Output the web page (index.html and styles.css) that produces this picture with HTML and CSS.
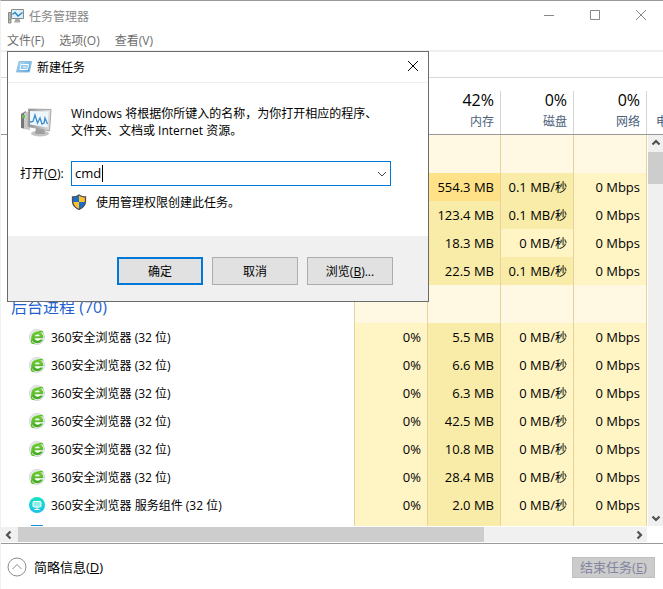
FILE: index.html
```html
<!DOCTYPE html>
<html lang="zh-CN">

<head>
  <meta charset="utf-8">
  <meta name="viewport" content="width=device-width, initial-scale=1.0">
  <title>任务管理器</title>
  <link rel="stylesheet" href="styles.css">
</head>

<body>
  <!-- 图标 -->
  <svg class="sprite" width="0" height="0" aria-hidden="true">
    <linearGradient id="green" x1="0" y1="0" x2="0" y2="1">
      <stop offset="0" stop-color="#7fd63c" />
      <stop offset="1" stop-color="#3aa51c" />
    </linearGradient>
    <linearGradient id="cyan" x1="0" y1="0" x2="0" y2="1">
      <stop offset="0" stop-color="#17e3c0" />
      <stop offset="1" stop-color="#1fbfea" />
    </linearGradient>
    <linearGradient id="blue" x1="0" y1="0" x2="1" y2="1">
      <stop offset="0" stop-color="#bfe0f5" />
      <stop offset="1" stop-color="#4c9ad8" />
    </linearGradient>
    <linearGradient id="metal" x1="0" y1="0" x2="1" y2="0">
      <stop offset="0" stop-color="#8d8d8d" />
      <stop offset="1" stop-color="#e4e4e4" />
    </linearGradient>
    <symbol id="browser" viewBox="0 0 16 16">
      <circle cx="8" cy="8" r="7.500" fill="#eceef1" stroke="#cfd3da" />
      <circle cx="8.300" cy="8.300" r="6" fill="url(#green)" />
      <path d="M5.600 7.300C6.200 4.900 10.300 4.800 10.800 7.300Z" fill="#fff" />
      <path d="M5.500 9.300H14.500V10.500H11C10 12.300 6.200 12.200 5.500 9.300Z" fill="#fff" />
      <path d="M2.200 14.300C.6 11.500 3.600 5.800 8.600 2.900C11.400 1.300 14.200 1 14.500 3.800C12.800 2.500 10.400 3.400 8 4.600C4.600 6.800 2.800 10.600 3.200 12.900C4 14 6.400 13.800 7.600 13.200C5.900 14.900 3.500 15.500 2.200 14.300Z" fill="#5fc02c" />
    </symbol>
    <symbol id="service" viewBox="0 0 16 16">
      <circle cx="8" cy="8" r="8" fill="url(#cyan)" />
      <rect x="4" y="4.500" width="8" height="5.500" rx="1" fill="#8ff0ea" stroke="#fff" />
      <path d="M8 10V12.500M5.500 12.500H10.500" stroke="#fff" fill="none" />
    </symbol>
    <symbol id="next" viewBox="0 0 16 16">
      <rect x="2" width="12" height="16" fill="#1296d6" />
    </symbol>
    <symbol id="arrow" viewBox="0 0 16 16">
      <path d="M4.500 9.500L8 6L11.500 9.500" fill="none" stroke="#505050" stroke-width="2.200" />
    </symbol>
  </svg>

  <div class="window">
    <header class="titlebar">
      <svg class="icon" viewBox="0 0 16 16">
        <path d="M.5 4.500H3V15H.5Z" fill="#b5b5b5" stroke="#8c8c8c" />
        <path d="M1 11.500H3" stroke="#53b553" />
        <path d="M3.500 1.500H15.500V10.500H3.500Z" fill="#d9effa" stroke="#8a8a8a" />
        <path d="M4.500 6.500L7 4.500L10 8L14.500 4.500" fill="none" stroke="#2b83bd" stroke-width="1.300" />
        <path d="M7.500 11H11.500L12.500 14.500H6Z" fill="#a9a9a9" />
      </svg>
      <h1>任务管理器</h1>
      <button class="win-btn" aria-label="最小化"><svg viewBox="0 0 12 12"><path d="M1 5.500H11" /></svg></button>
      <button class="win-btn" aria-label="最大化"><svg viewBox="0 0 12 12"><path d="M1.500 .5H10.500V9.500H1.500Z" /></svg></button>
      <button class="win-btn" aria-label="关闭"><svg viewBox="0 0 12 12"><path d="M1 0L11 10M11 0L1 10" /></svg></button>
    </header>
    <nav class="menu">
      <button>文件(F)</button>
      <button>选项(O)</button>
      <button>查看(V)</button>
    </nav>
    <div class="tabs"></div>

    <main class="grid">
      <table class="process">
        <colgroup>
          <col>
          <col class="num">
          <col class="num">
          <col class="num">
          <col class="num">
          <col class="rest">
        </colgroup>
        <thead>
          <tr>
            <th></th>
            <th></th>
            <th><div><b>42%</b>内存</div></th>
            <th><div><b>0%</b>磁盘</div></th>
            <th><div><b>0%</b>网络</div></th>
            <th class="power"><div>电</div></th>
          </tr>
        </thead>
        <tbody>
          <tr class="group"><td></td><td></td><td></td><td></td><td></td></tr>
          <tr><td></td><td></td><td class="high">554.3 MB</td><td class="mid">0.1 MB/<i>秒</i></td><td>0 Mbps</td></tr>
          <tr><td></td><td></td><td class="mid">123.4 MB</td><td class="mid">0.1 MB/<i>秒</i></td><td>0 Mbps</td></tr>
          <tr><td></td><td></td><td class="mid">18.3 MB</td><td>0 MB/<i>秒</i></td><td>0 Mbps</td></tr>
          <tr><td></td><td></td><td class="mid">22.5 MB</td><td class="mid">0.1 MB/<i>秒</i></td><td>0 Mbps</td></tr>
          <tr class="group"><td>后台进程 (70)</td><td></td><td></td><td></td><td></td></tr>
          <tr><td><svg class="icon"><use href="#browser" /></svg>360安全浏览器 (32 位)</td><td>0%</td><td class="mid">5.5 MB</td><td>0 MB/<i>秒</i></td><td>0 Mbps</td></tr>
          <tr><td><svg class="icon"><use href="#browser" /></svg>360安全浏览器 (32 位)</td><td>0%</td><td class="mid">6.6 MB</td><td>0 MB/<i>秒</i></td><td>0 Mbps</td></tr>
          <tr><td><svg class="icon"><use href="#browser" /></svg>360安全浏览器 (32 位)</td><td>0%</td><td class="mid">6.3 MB</td><td>0 MB/<i>秒</i></td><td>0 Mbps</td></tr>
          <tr><td><svg class="icon"><use href="#browser" /></svg>360安全浏览器 (32 位)</td><td>0%</td><td class="mid">42.5 MB</td><td>0 MB/<i>秒</i></td><td>0 Mbps</td></tr>
          <tr><td><svg class="icon"><use href="#browser" /></svg>360安全浏览器 (32 位)</td><td>0%</td><td class="mid">10.8 MB</td><td>0 MB/<i>秒</i></td><td>0 Mbps</td></tr>
          <tr><td><svg class="icon"><use href="#browser" /></svg>360安全浏览器 (32 位)</td><td>0%</td><td class="mid">28.4 MB</td><td>0 MB/<i>秒</i></td><td>0 Mbps</td></tr>
          <tr><td><svg class="icon"><use href="#service" /></svg>360安全浏览器 服务组件 (32 位)</td><td>0%</td><td class="mid">2.0 MB</td><td>0 MB/<i>秒</i></td><td>0 Mbps</td></tr>
          <tr><td><svg class="icon"><use href="#next" /></svg></td><td></td><td class="mid"></td><td></td><td></td></tr>
        </tbody>
      </table>
      <div class="vscroll">
        <svg class="icon"><use href="#arrow" /></svg>
        <div class="thumb"></div>
        <svg class="icon down"><use href="#arrow" /></svg>
      </div>
    </main>
    <div class="hscroll">
      <svg class="icon left"><use href="#arrow" /></svg>
      <div class="track"><div class="thumb"></div></div>
      <svg class="icon right"><use href="#arrow" /></svg>
    </div>

    <footer class="statusbar">
      <button class="fewer">
        <svg viewBox="0 0 20 20"><circle cx="10" cy="10" r="9" /><path d="M5.500 12L10 7.500L14.500 12" /></svg>
        <span>简略信息(<u>D</u>)</span>
      </button>
      <button class="end" disabled>结束任务(<u>E</u>)</button>
    </footer>
  </div>

  <div class="dialog" role="dialog" aria-labelledby="dlgTitle">
    <div class="dialog-title">
      <svg class="icon" viewBox="0 0 16 16">
        <path d="M3 2.500H15.500L13.500 13H.5Z" fill="url(#blue)" stroke="#8fc0e4" />
        <path d="M5 5.500H12.500L11.500 10.500H4Z" fill="#8fc6ee" stroke="#fff" />
        <path d="M7 8H10.500" stroke="#fff" />
      </svg>
      <h2 id="dlgTitle">新建任务</h2>
      <button class="win-btn" aria-label="关闭"><svg viewBox="0 0 12 12"><path d="M1 0L11 10M11 0L1 10" /></svg></button>
    </div>
    <form class="dialog-body">
      <svg class="computer" viewBox="0 0 32 32">
        <path d="M1 8L6 5V23L1 22Z" fill="#777" />
        <path d="M4 7L10 5V24L4 23Z" fill="#c9c9c9" />
        <path d="M2 9H5V12H2Z" fill="#68c545" />
        <ellipse cx="20" cy="27.500" rx="9" ry="3" fill="#c3c3c3" />
        <path d="M16 22H24L25 28H15Z" fill="#9f9f9f" />
        <path d="M8.500 3L31 3.500L29.500 25L8 20.500Z" fill="url(#metal)" stroke="#a5a5a5" />
        <path d="M10 5L28.500 5.500L27.500 21.500L10 18.500Z" fill="#eef7fd" />
        <path d="M10 16L13 15.500L15 9L17.500 17L20 12L22 18L24 17L25 12L27.500 18" fill="none" stroke="#3b8fd0" stroke-width="1.300" />
      </svg>
      <p>Windows 将根据你所键入的名称，为你打开相应的程序、<br>文件夹、文档或 Internet 资源。</p>
      <label for="txtOpen">打开(<u>O</u>):</label>
      <div class="combo">
        <input type="text" id="txtOpen" value="cmd">
        <span class="caret"></span>
        <button type="button" aria-label="历史记录"><svg viewBox="0 0 10 10"><path d="M1 3L5 7L9 3" /></svg></button>
      </div>
      <div class="admin">
        <svg class="icon" viewBox="0 0 16 16">
          <path d="M8 1C6 2.500 4 3 1.500 3V7C1.500 11 4.500 14 8 15.500Z" fill="#1b6ecb" />
          <path d="M8 1C10 2.500 12 3 14.500 3V7C14.500 11 11.500 14 8 15.500Z" fill="#ffc229" />
          <path d="M8 8H1.700C2.300 11.500 4.500 14 8 15.500Z" fill="#ffc229" />
          <path d="M8 8H14.300C13.700 11.500 11.500 14 8 15.500Z" fill="#1b6ecb" />
          <path d="M8 1C6 2.500 4 3 1.500 3V7C1.500 11 4.500 14 8 15.500C11.500 14 14.500 11 14.500 7V3C12 3 10 2.500 8 1Z" fill="none" stroke="#4c4f55" stroke-width="1.300" />
        </svg>
        <span>使用管理权限创建此任务。</span>
      </div>
    </form>
    <div class="dialog-buttons">
      <button class="primary">确定</button>
      <button>取消</button>
      <button>浏览(<u>B</u>)...</button>
    </div>
  </div>
</body>

</html>
```

FILE: styles.css
```css
* {
  box-sizing: border-box;
}

html,
body {
  margin: 0;
  height: 100%;
}

body {
  font: 12px/17px "Open Sans", "Noto Sans CJK SC", sans-serif;
  color: #000;
  background-color: #fff;
  overflow: hidden;
}

button,
input {
  font: inherit;
  color: inherit;
  border: none;
  padding: 0;
  background-color: transparent;
}

h1,
h2,
p {
  margin: 0;
  font-size: 12px;
  font-weight: normal;
}

.sprite {
  position: absolute;
}

.icon {
  display: block;
  width: 16px;
  height: 16px;
  flex: none;
}

.window {
  height: 100%;
  display: flex;
  flex-direction: column;
  border-top: 1px solid #999;
  border-left: 1px solid #f0f0f0;
}

.titlebar {
  display: flex;
  align-items: center;
  height: 30px;
  padding-left: 7px;
  color: #888;
}

.titlebar h1,
.dialog-title h2 {
  flex: 1;
  padding-left: 5px;
}

.win-btn {
  width: 46px;
  height: 28px;
  display: flex;
  align-items: center;
  justify-content: center;
}

.win-btn svg {
  width: 12px;
  height: 12px;
  fill: none;
  stroke: #888;
}

.titlebar .win-btn {
  padding-left: 2px;
}

.menu {
  display: flex;
  gap: 15px;
  height: 21px;
  padding-left: 6px;
  color: #6d6d6d;
  border-bottom: 2px solid #f0f0f0;
}

.tabs {
  height: 26px;
  border-bottom: 1px solid #d9d9d9;
}

/* 进程列表 */
.grid {
  flex: 1;
  min-height: 0;
  display: grid;
  grid-template: 57px minmax(0, 1fr) / minmax(0, 1fr) 15px;
  overflow: hidden;
}

.process {
  grid-area: 1 / 1 / 3 / 3;
  align-self: start;
  width: 100%;
  table-layout: fixed;
  border-collapse: separate;
  border-spacing: 0;
}

.num {
  width: 73px;
}

.rest {
  width: 16px;
}

.process th {
  height: 57px;
  padding: 13px 0 0;
  font-weight: normal;
  text-align: right;
  vertical-align: top;
  color: #4c607a;
  border-bottom: 1px solid #999;
}

.process th div {
  height: 43px;
  padding-right: 6px;
  border-right: 1px solid #d5d5d5;
}

.process .power div {
  border: none;
}

.process b {
  display: block;
  font-size: 16px;
  line-height: 18px;
  padding-bottom: 4px;
  font-weight: normal;
  color: #000;
}

.process .power div {
  width: 32px;
  padding: 22px 0 0 9px;
  text-align: left;
}

.process td {
  height: 28px;
  padding: 0 6px 0 0;
  font-size: 13px;
  text-align: right;
  white-space: nowrap;
  background-color: #fff4c4;
  border-right: 1px solid #e8d29a;
}

.process i {
  font-size: 12px;
  font-style: normal;
}

.process .mid {
  background-color: #f9eca8;
}

.process .high {
  background-color: #ffe288;
}

.process .group td {
  height: 38px;
  background-color: #fff8e2;
}

.process td:first-child,
.process .group td:first-child {
  padding-left: 28px;
  font-size: 12px;
  text-align: left;
  background-color: #fff;
}

.process .group td:first-child {
  padding: 6px 0 0 10px;
  font-size: 16px;
  color: #1f5fd0;
}

.process td .icon {
  float: left;
  margin-right: 6px;
}

/* 滚动条 */
.vscroll {
  grid-area: 2 / 2;
  display: flex;
  flex-direction: column;
  align-items: center;
  background-color: #f0f0f0;
}

.vscroll .thumb {
  width: 100%;
  height: 32px;
  margin-top: 1px;
  background-color: #cdcdcd;
}

.down {
  margin-top: auto;
  transform: rotate(180deg);
}

.hscroll {
  display: flex;
  align-items: center;
  height: 15px;
  margin: 1px 16px 1px 0;
  background-color: #f0f0f0;
}

.track {
  flex: 1;
  height: 100%;
  padding-left: 1px;
}

.hscroll .thumb {
  width: 76%;
  height: 100%;
  background-color: #cdcdcd;
}

.left {
  transform: rotate(-90deg);
}

.right {
  transform: rotate(90deg);
}

.statusbar {
  display: flex;
  align-items: center;
  justify-content: space-between;
  height: 46px;
  padding: 1px 8px 0 6px;
  font-size: 13px;
  border-top: 1px solid #999;
}

.fewer {
  display: flex;
  align-items: center;
  gap: 7px;
}

.fewer svg {
  width: 20px;
  height: 20px;
  fill: none;
  stroke: #8c8c8c;
}

.end {
  width: 83px;
  height: 21px;
  color: #8385a0;
  background-color: #ccc;
  border: 1px solid #bfbfbf;
}

/* 新建任务 */
.dialog {
  position: absolute;
  top: 51px;
  left: 7px;
  width: 422px;
  background-color: #fff;
  border: 1px solid #6b6b6b;
}

.dialog-title {
  display: flex;
  align-items: center;
  height: 31px;
  padding-left: 8px;
  border-bottom: 1px solid #f0f0f0;
}

.dialog-title .win-btn {
  width: 30px;
}

.dialog-title svg {
  stroke: #000;
}

.dialog-body {
  display: grid;
  grid-template-columns: 51px 320px;
  row-gap: 22px;
  align-items: center;
  padding: 22px 0 25px 12px;
}

.computer {
  width: 32px;
  height: 32px;
}

.dialog-body label {
  white-space: nowrap;
}

.combo {
  position: relative;
  display: flex;
  height: 25px;
  border: 1px solid #0078d7;
}

.combo input {
  flex: 1;
  padding-left: 3px;
  font-size: 13px;
  outline: none;
}

.combo .caret {
  position: absolute;
  top: 3px;
  left: 30px;
  width: 1px;
  height: 17px;
  background-color: #000;
}

.combo button {
  width: 17px;
}

.combo svg {
  display: block;
  width: 10px;
  height: 10px;
  margin: auto;
  fill: none;
  stroke: #444;
}

.admin {
  grid-column: 2;
  display: flex;
  gap: 9px;
  margin-top: -14px;
}

.dialog-buttons {
  display: flex;
  justify-content: flex-end;
  gap: 9px;
  padding: 21px 35px 16px;
  background-color: #f0f0f0;
}

.dialog-buttons button {
  width: 86px;
  height: 28px;
  background-color: #e1e1e1;
  border: 1px solid #adadad;
}

.dialog-buttons .primary {
  border: 2px solid #0078d7;
}
```
